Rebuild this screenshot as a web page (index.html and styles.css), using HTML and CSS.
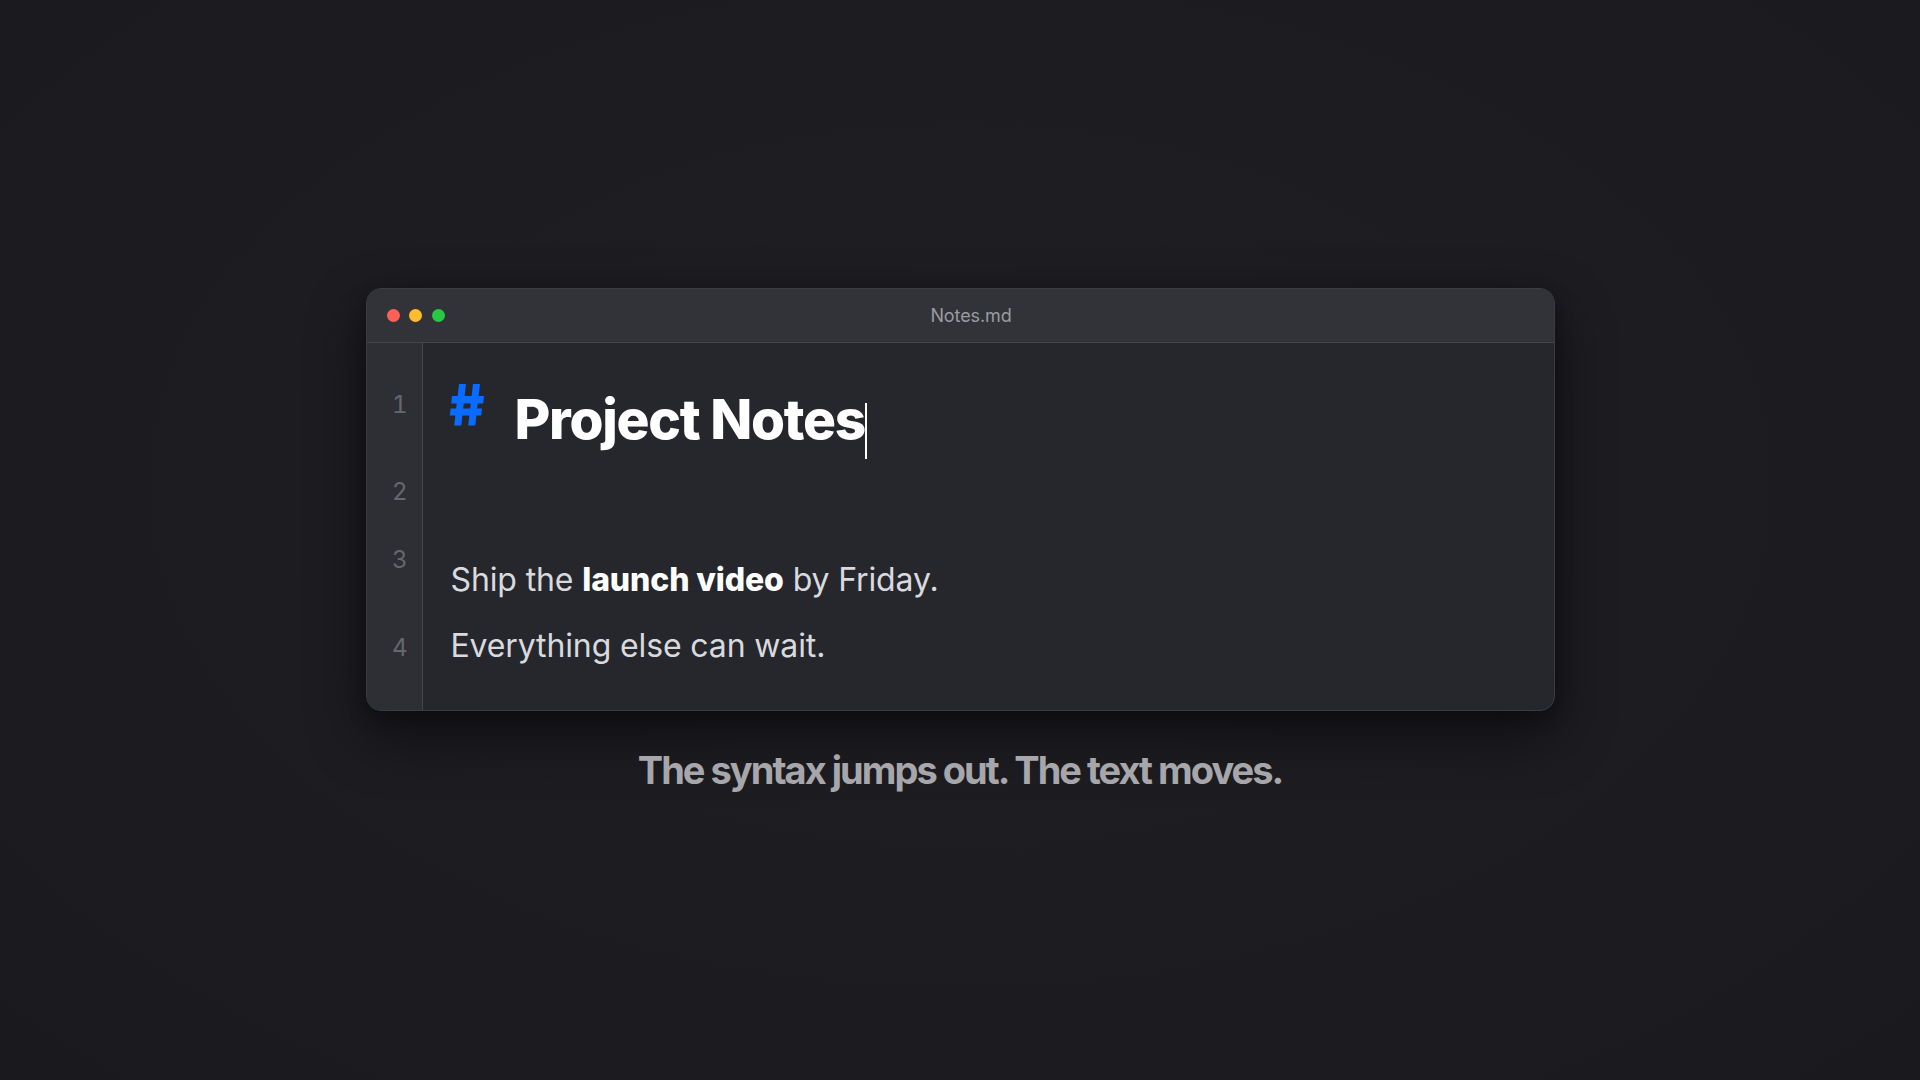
FILE: index.html
```html
<!DOCTYPE html>
<html lang="en">
<head>
<meta charset="utf-8">
<title>Notes.md</title>
<link rel="stylesheet" href="styles.css">
</head>
<body>
<main class="stage">
  <section class="window">
    <header class="titlebar">
      <div class="lights">
        <span class="light red"></span>
        <span class="light yellow"></span>
        <span class="light green"></span>
      </div>
      <div class="title">Notes.md</div>
    </header>
    <div class="editor">
      <div class="line line-1">
        <div class="ln"><span class="num">1</span></div>
        <div class="code">
          <svg class="hash" width="35" height="42" viewBox="0 0 35 42" aria-hidden="true">
            <polygon points="10,0 17,0 12.2,41.5 5.2,41.5" />
            <polygon points="24,0 31,0 26.2,41.5 19.2,41.5" />
            <polygon points="3,12 35,12 34.2,19.5 2.2,19.5" />
            <polygon points="1.6,24.5 33,24.5 32.2,31.5 0.8,31.5" />
          </svg>
          <h1 class="heading">Project Notes<span class="cursor"></span></h1>
        </div>
      </div>
      <div class="line line-2">
        <div class="ln"><span class="num">2</span></div>
        <div class="code"></div>
      </div>
      <div class="line line-3">
        <div class="ln"><span class="num">3</span></div>
        <div class="code"><p class="text">Ship the <strong>launch video</strong> by Friday.</p></div>
      </div>
      <div class="line line-4">
        <div class="ln"><span class="num">4</span></div>
        <div class="code"><p class="text">Everything else can wait.</p></div>
      </div>
    </div>
  </section>
  <p class="caption">The syntax jumps out. The text moves.</p>
</main>
</body>
</html>
```

FILE: styles.css
```css
* {
  box-sizing: border-box;
}

html, body {
  margin: 0;
  padding: 0;
  height: 100%;
}

body {
  background: radial-gradient(ellipse at 50% 45%, #1e1e23 0%, #1c1c21 55%, #1a1a1e 100%);
  font-family: Inter, "Noto Sans", sans-serif;
  overflow: hidden;
}

.stage {
  display: flex;
  flex-direction: column;
  align-items: center;
  padding-top: 288px;
}

.window {
  width: 1189px;
  height: 423px;
  border: 1px solid #3b3c42;
  border-radius: 15px;
  overflow: hidden;
  background: #26272c;
  box-shadow: 0 24px 60px rgba(0, 0, 0, 0.45), 0 6px 18px rgba(0, 0, 0, 0.3);
  display: flex;
  flex-direction: column;
}

.titlebar {
  height: 54px;
  flex: none;
  background: #323338;
  border-bottom: 1px solid #45464c;
  display: flex;
  align-items: center;
  padding: 0 56px 0 20px;
}

.lights {
  display: flex;
  gap: 9.5px;
}

.light {
  width: 13px;
  height: 13px;
  border-radius: 50%;
  display: block;
}

.red { background: #ff5f57; }
.yellow { background: #febc2e; }
.green { background: #28c840; }

.title {
  flex: 1;
  text-align: center;
  color: #9a9ba1;
  font-size: 18px;
  line-height: 18px;
  letter-spacing: -0.1px;
}

.editor {
  flex: 1;
  display: flex;
  flex-direction: column;
}

.line {
  display: flex;
}

.line-1 { height: 123px; }
.line-2 { height: 66px; }
.line-3 { height: 66px; }
.line-4 { flex: 1; }

.ln {
  width: 56px;
  flex: none;
  background: #2e2f34;
  border-right: 1px solid #45464c;
  text-align: right;
  padding-right: 14px;
  color: #66676d;
  font-size: 24px;
  line-height: 24px;
  font-variant-numeric: tabular-nums;
}

.line-1 .ln { padding-top: 49.5px; }
.line-2 .ln { padding-top: 13.5px; }
.line-3 .ln { padding-top: 15.5px; }
.line-4 .ln { padding-top: 37.5px; }

.code {
  flex: 1;
  padding-left: 28px;
}

.line-1 .code {
  display: flex;
  align-items: flex-start;
  padding-top: 41px;
}

.hash {
  fill: #0a6cff;
  flex: none;
  margin-left: -2px;
}

.heading {
  margin: 7.5px 0 0 31px;
  font-size: 55px;
  line-height: 55px;
  font-weight: 800;
  letter-spacing: -0.023em;
  color: #ffffff;
}

.cursor {
  display: inline-block;
  width: 2px;
  height: 56px;
  background: #ffffff;
  margin-left: 0;
  vertical-align: -20px;
}

.line-3 .code,
.line-4 .code {
  padding-top: 32px;
}

.text {
  margin: 0;
  font-size: 32px;
  line-height: 32px;
  color: #d9dadf;
  letter-spacing: -0.004em;
}

.text strong {
  color: #ffffff;
  font-weight: 800;
  letter-spacing: -0.004em;
}

.caption {
  margin: 40px 0 0;
  font-size: 38px;
  line-height: 38px;
  font-weight: 700;
  color: #a7a7ab;
  letter-spacing: -0.052em;
}
```
